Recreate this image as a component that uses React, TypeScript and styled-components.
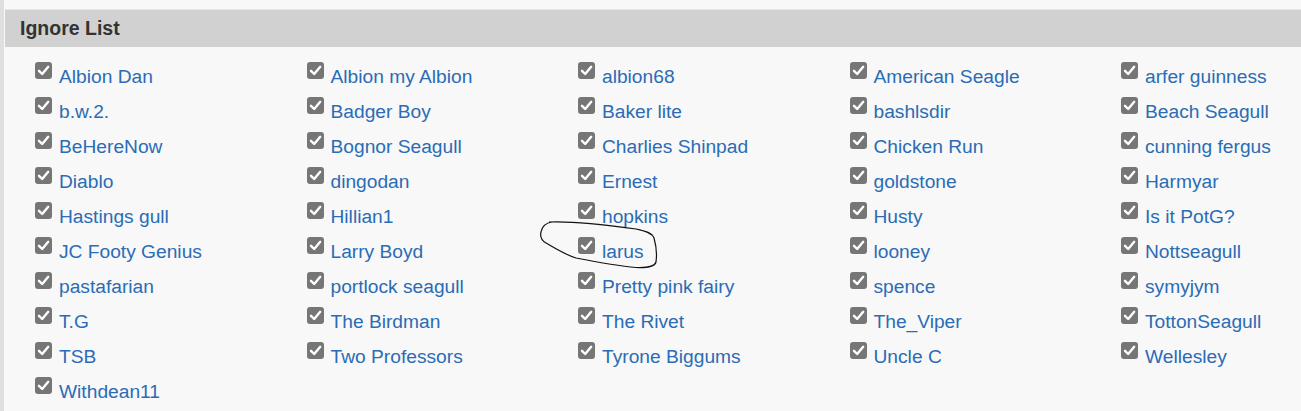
import React from "react";
import styled, { createGlobalStyle } from "styled-components";

const Global = createGlobalStyle`
  html, body { margin: 0; padding: 0; background: #f8f8f8; }
  body { font-family: "Liberation Sans", Arial, sans-serif; }
`;

const Page = styled.div`
  position: relative;
  width: 1301px;
  height: 411px;
  overflow: hidden;
  box-sizing: border-box;
  padding-top: 9px;
  padding-left: 5px;
  background: #f8f8f8;
  &::before {
    content: "";
    position: absolute;
    left: 0;
    top: 0;
    bottom: 0;
    width: 4px;
    background: #dfdfdf;
  }
`;

const Panel = styled.section`
  background: #f8f8f8;
`;

const Header = styled.div`
  height: 37px;
  border-top: 1px solid #e6e6e6;
  background: #d1d1d1;
  display: flex;
  align-items: center;
  padding-left: 15px;
  font-size: 19.5px;
  font-weight: bold;
  color: #333333;
`;

const Grid = styled.div`
  display: grid;
  grid-template-columns: repeat(5, 271.5px);
  grid-auto-rows: 35px;
  padding: 12px 0 0 30px;
`;

const Item = styled.label`
  display: flex;
  align-items: flex-start;
  gap: 7px;
  font-size: 19.2px;
  color: #2a6cb5;
  white-space: nowrap;
`;

const Box = styled.span`
  flex: none;
  width: 17px;
  height: 17px;
  margin-top: 3px;
  border-radius: 3px;
  background: #767676;
  display: flex;
  align-items: center;
  justify-content: center;
`;

const Name = styled.span`
  line-height: 35px;
`;

const Annotation = styled.svg`
  position: absolute;
  left: 0;
  top: 0;
  pointer-events: none;
`;

const names = [
  "Albion Dan", "Albion my Albion", "albion68", "American Seagle", "arfer guinness",
  "b.w.2.", "Badger Boy", "Baker lite", "bashlsdir", "Beach Seagull",
  "BeHereNow", "Bognor Seagull", "Charlies Shinpad", "Chicken Run", "cunning fergus",
  "Diablo", "dingodan", "Ernest", "goldstone", "Harmyar",
  "Hastings gull", "Hillian1", "hopkins", "Husty", "Is it PotG?",
  "JC Footy Genius", "Larry Boyd", "larus", "looney", "Nottseagull",
  "pastafarian", "portlock seagull", "Pretty pink fairy", "spence", "symyjym",
  "T.G", "The Birdman", "The Rivet", "The_Viper", "TottonSeagull",
  "TSB", "Two Professors", "Tyrone Biggums", "Uncle C", "Wellesley",
  "Withdean11",
];

const Check = () => (
  <svg width="13" height="13" viewBox="0 0 13 13">
    <path d="M2 6.8 L5.2 10 L11.2 2.8" fill="none" stroke="#fff" strokeWidth="2.4" strokeLinecap="round" strokeLinejoin="round" />
  </svg>
);

export default function App() {
  return (
    <>
      <Global />
      <Page>
        <Panel>
          <Header>Ignore List</Header>
          <Grid>
            {names.map((n) => (
              <Item key={n}>
                <Box><Check /></Box>
                <Name>{n}</Name>
              </Item>
            ))}
          </Grid>
        </Panel>
        <Annotation width="1301" height="411">
          <path
            d="M549 222 C 570 221, 600 224, 636 229 C 646 231, 652 233, 654 238 C 656 245, 657 255, 656 262 C 655 266, 648 268, 636 267.5 C 620 266, 602 263, 576 258 C 566 255, 558 250, 546 243 C 541 240, 540 236, 541 232 C 542 227, 545 223, 552 222"
            fill="none"
            stroke="#111"
            strokeWidth="1.2"
          />
        </Annotation>
      </Page>
    </>
  );
}
